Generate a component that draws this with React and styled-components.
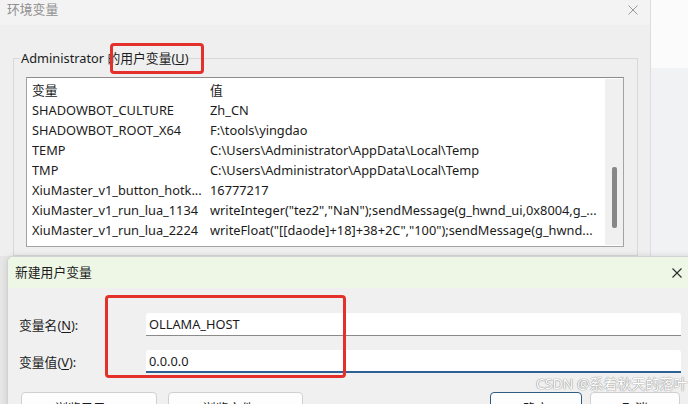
import React from "react";
import styled, { createGlobalStyle } from "styled-components";

const Global = createGlobalStyle`
  html, body { margin: 0; padding: 0; background: #ececec; }
  * { box-sizing: border-box; }
`;

const FONT = `"Noto Sans", "Noto Sans CJK SC", sans-serif`;

const Page = styled.div`
  position: relative;
  width: 688px;
  height: 404px;
  overflow: hidden;
  display: flex;
  flex-direction: column;
  background: #e8e8e8;
  font-family: ${FONT};
  font-size: 12.8px;
  color: #1b1b1b;
`;

const TopRow = styled.div`
  display: flex;
  height: 256px;
  flex-shrink: 0;
`;

const EnvWindow = styled.div`
  position: relative;
  width: 651px;
  flex-shrink: 0;
  display: flex;
  flex-direction: column;
  background: #efefef;
  border-right: 1px solid #dddddd;
  overflow: hidden;
`;

const EnvTitleBar = styled.div`
  height: 25px;
  flex-shrink: 0;
  display: flex;
  align-items: flex-start;
  justify-content: space-between;
  padding: 1px 12px 0 7px;
  background: #f3f3f3;
  color: #8f8f8f;
  line-height: 17px;
`;

const CloseIcon = ({ color = "#999", size = 10, w = 1 }) => (
  <svg width={size} height={size} viewBox="0 0 10 10" style={{ display: "block" }}>
    <path d="M0.5 0.5 L9.5 9.5 M9.5 0.5 L0.5 9.5" stroke={color} strokeWidth={w} fill="none" />
  </svg>
);

const TitleClose = styled.div`
  padding-top: ${(p) => p.$top}px;
`;

const GroupBox = styled.fieldset`
  margin: 24px 12px 0 13px;
  padding: 0 12px 0 12px;
  border: 1px solid #d8d8d8;
  height: 300px;
  min-width: 0;
`;

const Legend = styled.legend`
  margin-left: -6px;
  padding: 0 1px;
  line-height: 18px;
  color: #1b1b1b;
`;

const ListBox = styled.div`
  margin-top: 10px;
  width: 598px;
  height: 170px;
  display: flex;
  background: #fff;
  border: 1px solid #a3a3a3;
  border-top-color: #8c8c8c;
`;

const ListContent = styled.div`
  flex: 1;
  min-width: 0;
  padding: 2px 0 0 5px;
`;

const Row = styled.div`
  display: grid;
  grid-template-columns: 178px 1fr;
  height: 20px;
  line-height: 20px;
  white-space: nowrap;
`;

const Cell = styled.div`
  overflow: hidden;
  white-space: nowrap;
`;

const ScrollTrack = styled.div`
  width: 18px;
  flex-shrink: 0;
  margin: 1px 0 1px 0;
  background: #f0f0f0;
  display: flex;
  justify-content: center;
  padding-top: 88px;
`;

const ScrollThumb = styled.div`
  width: 5px;
  height: 61px;
  border-radius: 2px;
  background: #878787;
`;

const Highlight = styled.div`
  position: absolute;
  left: ${(p) => p.$x}px;
  top: ${(p) => p.$y}px;
  width: ${(p) => p.$w}px;
  height: ${(p) => p.$h}px;
  border: 3px solid #e3302a;
  border-radius: 4px;
  pointer-events: none;
`;

const Backdrop = styled.div`
  flex: 1;
  display: flex;
  flex-direction: column;
`;

const BackdropTop = styled.div`
  height: 68px;
  background: #fbfbfb;
`;

const BackdropBottom = styled.div`
  flex: 1;
  background: #f1f2f4;
`;

const BottomRow = styled.div`
  flex: 1;
  display: flex;
  padding-left: 7px;
  background: #e6e6e6;
`;

const NewWindow = styled.div`
  position: relative;
  width: 702px;
  flex-shrink: 0;
  display: flex;
  flex-direction: column;
  background: #f0f0f0;
  border: 1px solid #d2d2d2;
  border-right: none;
  border-bottom: none;
  border-top-left-radius: 6px;
  box-shadow: 0 0 6px rgba(0, 0, 0, 0.12);
  overflow: hidden;
`;

const NewTitleBar = styled.div`
  height: 31px;
  flex-shrink: 0;
  display: flex;
  align-items: center;
  justify-content: space-between;
  padding: 0 27px 0 7px;
  background: #eef7e6;
  line-height: 17px;
`;

const NewBody = styled.div`
  padding: 25px 0 0 11px;
  display: flex;
  flex-direction: column;
`;

const FormRow = styled.div`
  display: flex;
  align-items: center;
  height: 23px;
  margin-bottom: ${(p) => p.$mb || 0}px;
`;

const Label = styled.div`
  width: 127px;
  flex-shrink: 0;
  u { text-decoration: underline; text-underline-offset: 2px; }
`;

const TextInput = styled.div`
  width: 535px;
  height: 23px;
  display: flex;
  align-items: center;
  padding-left: 3px;
  background: #ffffff;
  border-radius: 3px 3px 0 0;
  border-bottom: ${(p) => (p.$focused ? "2px solid #2d6095" : "1px solid #8a8a8a")};
  line-height: 20px;
`;

const ButtonRow = styled.div`
  display: flex;
  margin-top: 19px;
  padding-left: 2px;
`;

const Button = styled.div`
  width: ${(p) => p.$w}px;
  height: 28px;
  flex-shrink: 0;
  margin-left: ${(p) => p.$ml || 0}px;
  display: flex;
  align-items: center;
  justify-content: center;
  background: #fdfdfd;
  border: 1px solid ${(p) => (p.$primary ? "#2e5f80" : "#d0d0d0")};
  border-radius: 4px;
  padding-top: 3px;
`;

const Watermark = styled.div`
  position: absolute;
  left: 536px;
  top: 374px;
  font-size: 14px;
  line-height: 20px;
  color: #ffffff;
  white-space: nowrap;
  text-shadow: 0 0 1px #9a9a9a, 0 0 1px #9a9a9a, 0 0 1px #9a9a9a;
`;

const rows = [
  ["SHADOWBOT_CULTURE", "Zh_CN"],
  ["SHADOWBOT_ROOT_X64", "F:\\tools\\yingdao"],
  ["TEMP", "C:\\Users\\Administrator\\AppData\\Local\\Temp"],
  ["TMP", "C:\\Users\\Administrator\\AppData\\Local\\Temp"],
  ["XiuMaster_v1_button_hotk...", "16777217"],
  ["XiuMaster_v1_run_lua_1134", 'writeInteger("tez2","NaN");sendMessage(g_hwnd_ui,0x8004,g_...'],
  ["XiuMaster_v1_run_lua_2224", 'writeFloat("[[daode]+18]+38+2C","100");sendMessage(g_hwnd...'],
];

export default function App() {
  return (
    <>
      <Global />
      <Page>
        <TopRow>
          <EnvWindow>
            <EnvTitleBar>
              <span>环境变量</span>
              <TitleClose $top={4}>
                <CloseIcon color="#9a9a9a" size={10} />
              </TitleClose>
            </EnvTitleBar>
            <GroupBox>
              <Legend>Administrator 的用户变量(<u>U</u>)</Legend>
              <ListBox>
                <ListContent>
                  <Row>
                    <Cell>变量</Cell>
                    <Cell>值</Cell>
                  </Row>
                  {rows.map(([k, v]) => (
                    <Row key={k}>
                      <Cell>{k}</Cell>
                      <Cell>{v}</Cell>
                    </Row>
                  ))}
                </ListContent>
                <ScrollTrack>
                  <ScrollThumb />
                </ScrollTrack>
              </ListBox>
            </GroupBox>
            <Highlight $x={110} $y={43} $w={94} $h={31} />
          </EnvWindow>
          <Backdrop>
            <BackdropTop />
            <BackdropBottom />
          </Backdrop>
        </TopRow>
        <BottomRow>
          <NewWindow>
            <NewTitleBar>
              <span>新建用户变量</span>
              <CloseIcon color="#2a2a2a" size={10} w={1.1} />
            </NewTitleBar>
            <NewBody>
              <FormRow $mb={14}>
                <Label>变量名(<u>N</u>):</Label>
                <TextInput>OLLAMA_HOST</TextInput>
              </FormRow>
              <FormRow>
                <Label>变量值(<u>V</u>):</Label>
                <TextInput $focused>0.0.0.0</TextInput>
              </FormRow>
              <ButtonRow>
                <Button $w={136}>浏览目录(<u>D</u>)</Button>
                <Button $w={135} $ml={11}>浏览文件(<u>F</u>)</Button>
                <Button $w={92} $ml={187} $primary>确定</Button>
                <Button $w={90} $ml={8}>取消</Button>
              </ButtonRow>
            </NewBody>
          </NewWindow>
        </BottomRow>
        <Highlight $x={105} $y={295} $w={241} $h={83} />
        <Watermark>CSDN @系着秋天的落叶</Watermark>
      </Page>
    </>
  );
}
